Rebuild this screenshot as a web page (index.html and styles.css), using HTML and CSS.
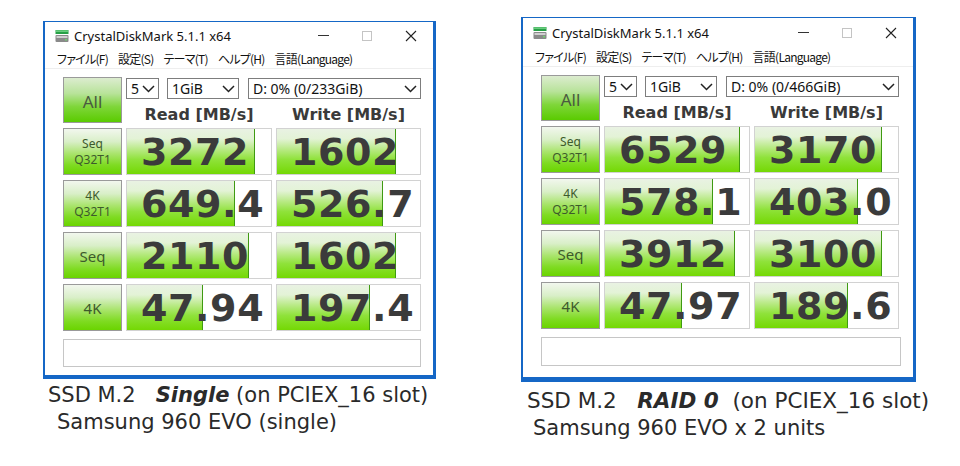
FILE: index.html
```html
<!DOCTYPE html>
<html lang="ja">
<head>
<meta charset="utf-8">
<title>CrystalDiskMark comparison</title>
<link rel="stylesheet" href="styles.css">
</head>
<body>
<div class="page">
  <section class="col col-left">
    <div class="win">
      <div class="titlebar">
        <svg class="appicon" width="14" height="14" viewBox="0 0 14 14"><rect x="0.5" y="1" width="13" height="4" fill="#27a046"/><rect x="1" y="1.5" width="12" height="1.2" fill="#86e096"/><rect x="0.5" y="6" width="13" height="7" rx="1" fill="#8a8a8a"/><rect x="1.5" y="7" width="11" height="2" fill="#cfcfcf"/><rect x="10" y="10" width="2" height="1.5" fill="#6fd36f"/></svg>
        <span class="title">CrystalDiskMark 5.1.1 x64</span>
        <div class="controls">
          <span class="ctl"><span class="g-min"></span></span>
          <span class="ctl"><span class="g-max"></span></span>
          <span class="ctl"><svg width="12" height="12" viewBox="0 0 12 12"><path d="M1 1L11 11M11 1L1 11" stroke="#222" stroke-width="1.1"/></svg></span>
        </div>
      </div>
      <div class="menubar">
        <span class="mi">ファイル(F)</span><span class="mi">設定(S)</span><span class="mi">テーマ(T)</span><span class="mi">ヘルプ(H)</span><span class="mi">言語(Language)</span>
      </div>
      <div class="panel">
        <div class="topgrid">
          <div class="btn all">All</div>
          <div class="selects">
            <div class="sel s1"><span>5</span><svg width="13" height="8" viewBox="0 0 13 8"><polyline points="1,1 6.5,6.5 12,1" fill="none" stroke="#222" stroke-width="1.5"/></svg></div>
            <div class="sel s2"><span>1GiB</span><svg width="13" height="8" viewBox="0 0 13 8"><polyline points="1,1 6.5,6.5 12,1" fill="none" stroke="#222" stroke-width="1.5"/></svg></div>
            <div class="sel s3"><span>D: 0% (0/233GiB)</span><svg width="13" height="8" viewBox="0 0 13 8"><polyline points="1,1 6.5,6.5 12,1" fill="none" stroke="#222" stroke-width="1.5"/></svg></div>
          </div>
          <div class="hdr">Read [MB/s]</div>
          <div class="hdr">Write [MB/s]</div>
        </div>
        <div class="datagrid">
          <div class="btn lbl two">Seq<br>Q32T1</div>
          <div class="cell"><span class="fill" style="width:89%"></span><span class="num">3272</span></div>
          <div class="cell"><span class="fill" style="width:83.4%"></span><span class="num">1602</span></div>
          <div class="btn lbl two">4K<br>Q32T1</div>
          <div class="cell"><span class="fill" style="width:75.3%"></span><span class="num">649.4</span></div>
          <div class="cell"><span class="fill" style="width:73.8%"></span><span class="num">526.7</span></div>
          <div class="btn lbl one">Seq</div>
          <div class="cell"><span class="fill" style="width:84.9%"></span><span class="num">2110</span></div>
          <div class="cell"><span class="fill" style="width:83.4%"></span><span class="num">1602</span></div>
          <div class="btn lbl one">4K</div>
          <div class="cell"><span class="fill" style="width:52.7%"></span><span class="num">47.94</span></div>
          <div class="cell"><span class="fill" style="width:64.8%"></span><span class="num">197.4</span></div>
        </div>
        <div class="status"></div>
      </div>
    </div>
    <p class="cap l1">SSD M.2   <b><i>Single</i></b> (on PCIEX_16 slot)</p>
    <p class="cap l2">Samsung 960 EVO (single)</p>
  </section>

  <section class="col col-right">
    <div class="win">
      <div class="titlebar">
        <svg class="appicon" width="14" height="14" viewBox="0 0 14 14"><rect x="0.5" y="1" width="13" height="4" fill="#27a046"/><rect x="1" y="1.5" width="12" height="1.2" fill="#86e096"/><rect x="0.5" y="6" width="13" height="7" rx="1" fill="#8a8a8a"/><rect x="1.5" y="7" width="11" height="2" fill="#cfcfcf"/><rect x="10" y="10" width="2" height="1.5" fill="#6fd36f"/></svg>
        <span class="title">CrystalDiskMark 5.1.1 x64</span>
        <div class="controls">
          <span class="ctl"><span class="g-min"></span></span>
          <span class="ctl"><span class="g-max"></span></span>
          <span class="ctl"><svg width="12" height="12" viewBox="0 0 12 12"><path d="M1 1L11 11M11 1L1 11" stroke="#222" stroke-width="1.1"/></svg></span>
        </div>
      </div>
      <div class="menubar">
        <span class="mi">ファイル(F)</span><span class="mi">設定(S)</span><span class="mi">テーマ(T)</span><span class="mi">ヘルプ(H)</span><span class="mi">言語(Language)</span>
      </div>
      <div class="panel">
        <div class="topgrid">
          <div class="btn all">All</div>
          <div class="selects">
            <div class="sel s1"><span>5</span><svg width="13" height="8" viewBox="0 0 13 8"><polyline points="1,1 6.5,6.5 12,1" fill="none" stroke="#222" stroke-width="1.5"/></svg></div>
            <div class="sel s2"><span>1GiB</span><svg width="13" height="8" viewBox="0 0 13 8"><polyline points="1,1 6.5,6.5 12,1" fill="none" stroke="#222" stroke-width="1.5"/></svg></div>
            <div class="sel s3"><span>D: 0% (0/466GiB)</span><svg width="13" height="8" viewBox="0 0 13 8"><polyline points="1,1 6.5,6.5 12,1" fill="none" stroke="#222" stroke-width="1.5"/></svg></div>
          </div>
          <div class="hdr">Read [MB/s]</div>
          <div class="hdr">Write [MB/s]</div>
        </div>
        <div class="datagrid">
          <div class="btn lbl two">Seq<br>Q32T1</div>
          <div class="cell"><span class="fill" style="width:93.8%"></span><span class="num">6529</span></div>
          <div class="cell"><span class="fill" style="width:89%"></span><span class="num">3170</span></div>
          <div class="btn lbl two">4K<br>Q32T1</div>
          <div class="cell"><span class="fill" style="width:75.2%"></span><span class="num">578.1</span></div>
          <div class="cell"><span class="fill" style="width:71.7%"></span><span class="num">403.0</span></div>
          <div class="btn lbl one">Seq</div>
          <div class="cell"><span class="fill" style="width:90.3%"></span><span class="num">3912</span></div>
          <div class="cell"><span class="fill" style="width:89%"></span><span class="num">3100</span></div>
          <div class="btn lbl one">4K</div>
          <div class="cell"><span class="fill" style="width:53.8%"></span><span class="num">47.97</span></div>
          <div class="cell"><span class="fill" style="width:64.8%"></span><span class="num">189.6</span></div>
        </div>
        <div class="status"></div>
      </div>
    </div>
    <p class="cap l1">SSD M.2   <b><i>RAID 0</i></b>  (on PCIEX_16 slot)</p>
    <p class="cap l2">Samsung 960 EVO x 2 units</p>
  </section>
</div>
</body>
</html>
```

FILE: styles.css
```css
* { box-sizing: border-box; margin: 0; padding: 0; }
html, body { background: #fff; }
body {
  width: 960px;
  height: 466px;
  overflow: hidden;
  font-family: "DejaVu Sans", sans-serif;
  color: #222;
}
.page { display: flex; align-items: flex-start; }
.col { flex: none; }
.col-left { margin-left: 43px; margin-top: 21px; width: 393px; }
.col-right { margin-left: 85px; margin-top: 17px; width: 395px; }

.win {
  border-style: solid;
  border-color: #1567c6;
  border-width: 1px 3px 4px 2px;
  background: #fff;
  height: 358px;
}
.col-right .win { height: 365px; border-width: 1px 3px 5px 2px; }

.titlebar {
  height: 27px;
  display: flex;
  align-items: center;
  padding-left: 10px;
}
.col-right .titlebar { height: 29px; }
.appicon { flex: none; margin-right: 5px; }
.title {
  font-family: "Noto Sans", sans-serif;
  font-size: 13px;
  color: #111;
}
.controls { margin-left: auto; display: flex; height: 100%; }
.ctl {
  width: 44px;
  height: 100%;
  display: flex;
  align-items: center;
  justify-content: center;
}
.g-min { width: 11px; height: 1px; background: #333; }
.g-max { width: 10px; height: 10px; border: 1px solid #c4c4c4; }

.menubar {
  height: 20px;
  display: flex;
  align-items: center;
  gap: 10px;
  padding-left: 12px;
  font-family: "Noto Sans CJK JP", sans-serif;
  font-size: 12px;
  letter-spacing: -0.75px;
  font-feature-settings: "palt";
  color: #111;
  border-bottom: 1px solid #eeeeee;
}

.panel { padding: 8px 12px 0 18px; }

.topgrid {
  display: grid;
  grid-template-columns: 59px 146px 145px;
  grid-template-rows: 22px 24px;
  column-gap: 4px;
}
.btn {
  border: 1px solid #9a9a9a;
  background: linear-gradient(to bottom, #f2f7ee 0%, #d9efc8 28%, #a9e46c 55%, #7fdb22 80%, #6ad400 100%);
  display: flex;
  align-items: center;
  justify-content: center;
  text-align: center;
  font-family: "Noto Sans", sans-serif;
  color: #3d5a2c;
}
.all {
  grid-row: 1 / 3;
  font-size: 17px;
  padding-top: 2px;
  background: linear-gradient(to bottom, #dceccf 0%, #b8e39a 35%, #7fd63a 65%, #5acb00 100%);
  color: #4a5a40;
}
.selects {
  grid-column: 2 / 4;
  display: flex;
  align-items: flex-start;
  padding-top: 1px;
}
.sel {
  height: 21px;
  border: 1px solid #7d7d7d;
  display: flex;
  align-items: center;
  justify-content: space-between;
  padding: 0 3px 0 4px;
  font-family: "Noto Sans", sans-serif;
  font-size: 14px;
  color: #111;
  background: #fff;
}
.s1 { width: 33px; }
.s2 { width: 72px; margin-left: 8px; }
.s3 { width: 173px; margin-left: 9px; }
.hdr {
  font-weight: bold;
  font-size: 16px;
  color: #3a3a3a;
  text-align: center;
  line-height: 20px;
  padding-top: 6px;
}

.datagrid {
  margin-top: 5px;
  display: grid;
  grid-template-columns: 59px 146px 145px;
  grid-auto-rows: 47px;
  column-gap: 4px;
  row-gap: 5px;
}
.lbl { font-size: 12px; line-height: 16px; }
.lbl.one { font-size: 15px; }
.cell {
  position: relative;
  border: 1px solid #d2d2d2;
  background: #fff;
  overflow: hidden;
  display: flex;
  align-items: center;
  justify-content: flex-start;
  padding-left: 14px;
}
.fill {
  position: absolute;
  left: 0;
  top: 0;
  bottom: 0;
  background: linear-gradient(to bottom, #e9f2e3 0%, #e3f3d6 22%, #b9ea86 45%, #8fe23a 68%, #74d804 100%);
  border-right: 1px solid #3f9a12;
}
.num {
  position: relative;
  font-weight: bold;
  font-size: 38px;
  letter-spacing: 0.6px;
  color: #3b3b3b;
  line-height: 1;
}
.status {
  margin-top: 8px;
  height: 28px;
  border: 1px solid #c6c6c6;
  background: #fff;
}
.col-right .status { height: 29px; }

.cap {
  white-space: pre;
  font-size: 21px;
  line-height: 27px;
  color: #2a2a2a;
}
.col-left .l1 { margin-top: 3px; padding-left: 5px; }
.col-left .l2 { padding-left: 14px; }
.col-right .l1 { margin-top: 5px; padding-left: 6px; font-size: 21.5px; }
.col-right .l2 { padding-left: 12px; margin-top: 1px; }
```
